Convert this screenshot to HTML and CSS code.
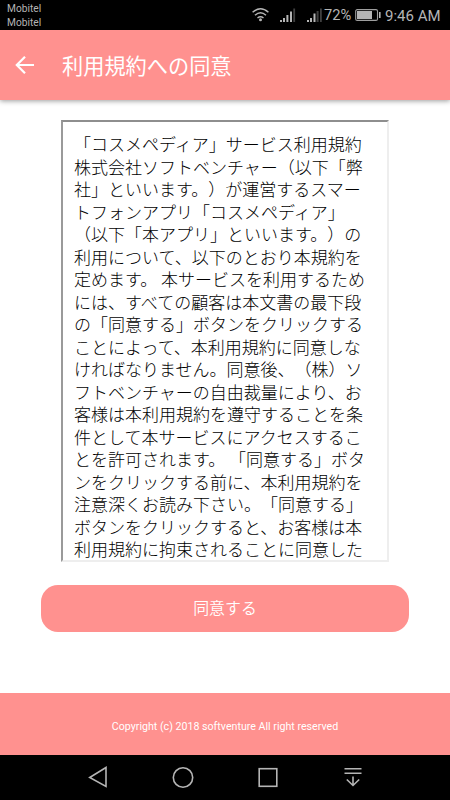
FILE: index.html
```html
<!DOCTYPE html>
<html lang="ja">
<head>
  <meta charset="utf-8">
  <meta name="viewport" content="width=device-width, initial-scale=1">
  <title>利用規約への同意</title>
  <link rel="stylesheet" href="styles.css">
</head>
<body>
<div class="status-bar">
    <div class="carriers">
        <div>Mobitel</div>
        <div>Mobitel</div>
    </div>
    <svg class="status-icons" width="72" height="30" viewBox="0 0 72 30">
        <g fill="none" stroke="#b5b5b5" stroke-width="1.5">
            <path d="M.6 12.3Q8.5 5.2 16.4 12.3"/>
            <path d="M3 15.2Q8.5 10.3 14 15.2"/>
            <path d="M5.5 18Q8.5 15.6 11.5 18"/>
        </g>
        <circle cx="8.5" cy="19.8" r="1.5" fill="#b5b5b5"/>
        <g fill="#b5b5b5">
            <path d="M28 20h2v2h-2zM31 18h2v4h-2zM34.4 15h2v7h-2zM38 11.5h2V22h-2z"/>
            <path d="M55 20h2v2h-2zM58 18h2v4h-2zM61.5 13.5h2V22h-2z"/>
        </g>
        <path d="M41.3 8.5h1.8V22h-1.8zM64.6 11h2v11h-2zM68 8.5h1.8V22H68z" fill="#404040"/>
    </svg>
    <span class="percent">72%</span>
    <svg class="battery" width="26" height="12" viewBox="0 0 26 12">
        <rect x=".7" y=".6" width="21.8" height="10.8" rx="1.5" fill="none" stroke="#9e9e9e" stroke-width="1.1"/>
        <path d="M2 2h15v8H2z" fill="#b5b5b5"/>
        <path d="M24 3h1.6v6H24z" fill="#b5b5b5"/>
    </svg>
    <span class="clock">9:46 AM</span>
</div>

<div class="header">
    <svg class="back" width="20" height="20" viewBox="0 0 20 20">
        <path d="M10 1.7L1.8 10l8.2 8.3M2 10h17" fill="none" stroke="#fff" stroke-width="2.2"/>
    </svg>
    <div class="title">利用規約への同意</div>
</div>

<div class="content">
    <div class="terms">
        「コスメペディア」サービス利用規約<br>
        株式会社ソフトベンチャー（以下「弊<br>
        社」といいます。）が運営するスマー<br>
        トフォンアプリ「コスメペディア」<br>
        （以下「本アプリ」といいます。）の<br>
        利用について、以下のとおり本規約を<br>
        定めます。 本サービスを利用するため<br>
        には、すべての顧客は本文書の最下段<br>
        の「同意する」ボタンをクリックする<br>
        ことによって、本利用規約に同意しな<br>
        ければなりません。同意後、（株）ソ<br>
        フトベンチャーの自由裁量により、お<br>
        客様は本利用規約を遵守することを条<br>
        件として本サービスにアクセスするこ<br>
        とを許可されます。 「同意する」ボタ<br>
        ンをクリックする前に、本利用規約を<br>
        注意深くお読み下さい。「同意する」<br>
        ボタンをクリックすると、お客様は本<br>
        利用規約に拘束されることに同意した
    </div>
    <button class="agree">同意する</button>
</div>

<div class="footer">Copyright (c) 2018 softventure All right reserved</div>

<div class="nav-bar">
    <svg width="24" height="24" viewBox="0 0 24 24">
        <path d="M20 2.5v19L3.7 12.5z"/>
    </svg>
    <svg width="24" height="24" viewBox="0 0 24 24">
        <circle cx="12" cy="12.5" r="9.7"/>
    </svg>
    <svg width="24" height="24" viewBox="0 0 24 24">
        <rect x="3.2" y="3.7" width="17.6" height="17.6"/>
    </svg>
    <svg width="24" height="24" viewBox="0 0 24 24">
        <path d="M3.5 3.8h17M3.5 8.3h17M12 11.5v9M5.8 14.5l6.2 6 6.2-6"/>
    </svg>
</div>
</body>
</html>
```
FILE: styles.css
```css
html, body {
    margin: 0;
    height: 100%;
}
body {
    display: flex;
    flex-direction: column;
    background: #fff;
    font-family: Roboto, "Noto Sans CJK JP", sans-serif;
    overflow: hidden;
}
.status-bar {
    display: flex;
    height: 30px;
    flex-shrink: 0;
    background: #000;
    color: #b5b5b5;
}
.carriers {
    width: 244px;
    padding: 2px 0 0 7px;
    font-size: 10.2px;
    line-height: 14px;
}
.status-icons {
    margin-left: 1px;
}
.percent {
    width: 31px;
    font-size: 14.7px;
    line-height: 30px;
}
.battery {
    margin: 9px 0 0 0;
}
.clock {
    margin-left: 4px;
    font-size: 15px;
    line-height: 32px;
    white-space: nowrap;
}
.header {
    display: flex;
    align-items: center;
    height: 70px;
    flex-shrink: 0;
    background: #ff918f;
    box-shadow: 0 1px 5px rgba(0, 0, 0, 0.4);
}
.back {
    margin-left: 15px;
}
.title {
    margin-left: 27px;
    padding-top: 4px;
    color: #fff;
    font-size: 21.2px;
    font-weight: 400;
    line-height: 30px;
}
.content {
    display: flex;
    flex-direction: column;
    align-items: center;
    flex: 1;
    min-height: 0;
    padding-top: 20px;
}
.terms {
    box-sizing: border-box;
    width: 328px;
    height: 442px;
    flex-shrink: 0;
    padding: 11px 0 0 11px;
    border: 2px solid;
    border-color: #8e8e8e #eee #eee #9a9a9a;
    color: #000;
    font-family: "Noto Sans CJK JP", sans-serif;
    font-size: 17px;
    font-weight: 300;
    line-height: 22.5px;
    white-space: nowrap;
    text-spacing-trim: space-all;
    overflow: hidden;
}
.agree {
    width: 368px;
    height: 47px;
    flex-shrink: 0;
    margin-top: 23px;
    padding: 0 0 3px;
    border: none;
    border-radius: 17px;
    background: #ff918f;
    color: #fff;
    font-family: "Noto Sans CJK JP", sans-serif;
    font-size: 15.9px;
    font-weight: 350;
}
.footer {
    height: 62px;
    flex-shrink: 0;
    background: #ff918f;
    color: #fff;
    font-size: 10.65px;
    line-height: 67px;
    text-align: center;
}
.nav-bar {
    display: flex;
    justify-content: center;
    gap: 61px;
    box-sizing: border-box;
    height: 45px;
    flex-shrink: 0;
    padding-top: 10px;
    background: #000;
}
.nav-bar svg {
    fill: none;
    stroke: #b5b5b5;
    stroke-width: 1.6;
}
```
